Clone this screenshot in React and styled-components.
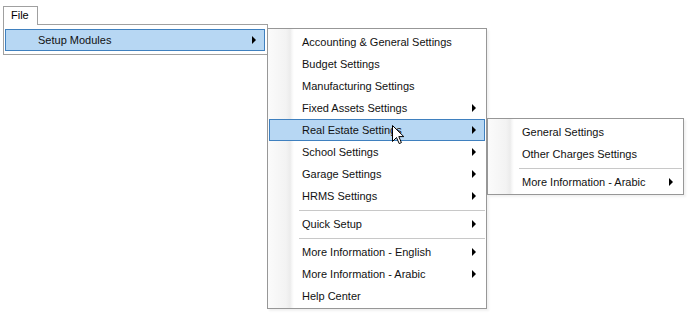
import React from "react";
import styled, { createGlobalStyle } from "styled-components";

const GlobalStyle = createGlobalStyle`
  body {
    margin: 0;
    background: #fff;
    font-family: "Liberation Sans", Arial, sans-serif;
    font-size: 11px;
    color: #000;
  }
`;

const Page = styled.div`
  position: relative;
  width: 698px;
  height: 322px;
  padding: 6px 0 0 3px;
  box-sizing: border-box;
`;

const MenuRoot = styled.div`
  position: relative;
  width: 35px;
`;

const FileTab = styled.div`
  position: relative;
  z-index: 2;
  box-sizing: border-box;
  width: 35px;
  height: 19px;
  border: 1px solid #a0a0a0;
  border-bottom: none;
  background: #fff;
  padding-left: 7px;
  line-height: 17px;
`;

const Dropdown = styled.div`
  position: absolute;
  z-index: 1;
  top: 18px;
  left: 0;
  width: 265px;
  box-sizing: border-box;
  border: 1px solid #a0a0a0;
  background: #fff;
  padding: 4px 2px 3px 1px;
`;

const Popup = styled.div`
  position: absolute;
  z-index: 3;
  left: ${(p) => p.$left}px;
  top: ${(p) => p.$top}px;
  width: ${(p) => p.$width}px;
  box-sizing: border-box;
  border: 1px solid #979797;
  padding: 2px 1px 1px 1px;
  background: linear-gradient(
    90deg,
    #fbfbfb 0px,
    #f3f3f3 18px,
    #ececec 22px,
    #f7f7f7 24px,
    #fff 26px,
    #fff 100%
  );
  box-shadow: 2px 2px 2px rgba(0, 0, 0, 0.06);
`;

const Item = styled.div`
  position: relative;
  display: flex;
  align-items: center;
  height: 22px;
  box-sizing: border-box;
  border: 1px solid ${(p) => (p.$active ? "#3f80bf" : "transparent")};
  background: ${(p) => (p.$active ? "#b7d7f3" : "transparent")};
  padding: 0 8px 0 32px;
  white-space: nowrap;
`;

const Label = styled.span`
  flex: 1;
  color: #111;
`;

const Arrow = styled.span`
  width: 0;
  height: 0;
  border-left: 4px solid #000;
  border-top: 4px solid transparent;
  border-bottom: 4px solid transparent;
`;

const Separator = styled.div`
  height: 6px;
  display: flex;
  align-items: center;
  padding-left: 30px;
  &::after {
    content: "";
    flex: 1;
    height: 1px;
    background: #c8c8c8;
  }
`;

const Cursor = styled.svg`
  position: absolute;
  z-index: 5;
  left: 122px;
  top: 5px;
`;

const MenuItem = ({ label, sub, active, children }) => (
  <Item $active={active}>
    <Label>{label}</Label>
    {sub && <Arrow />}
    {children}
  </Item>
);

export default function App() {
  return (
    <>
      <GlobalStyle />
      <Page>
        <MenuRoot>
          <FileTab>File</FileTab>
          <Dropdown>
            <MenuItem label="Setup Modules" sub active>
              <Popup $left={261} $top={-2} $width={220}>
                <MenuItem label="Accounting & General Settings" />
                <MenuItem label="Budget Settings" />
                <MenuItem label="Manufacturing Settings" />
                <MenuItem label="Fixed Assets Settings" sub />
                <MenuItem label="Real Estate Settings" sub active>
                  <Popup $left={217} $top={-2} $width={197}>
                    <MenuItem label="General Settings" />
                    <MenuItem label="Other Charges Settings" />
                    <Separator />
                    <MenuItem label="More Information - Arabic" sub />
                  </Popup>
                  <Cursor width="13" height="20" viewBox="0 0 13 20">
                    <path
                      d="M0.5 0.5 L0.5 16.5 L4.5 12.5 L7.2 18.6 L9.4 17.6 L6.8 11.6 L11.8 11.6 Z"
                      fill="#fff"
                      stroke="#000"
                      strokeWidth="1"
                      strokeLinejoin="miter"
                    />
                  </Cursor>
                </MenuItem>
                <MenuItem label="School Settings" sub />
                <MenuItem label="Garage Settings" sub />
                <MenuItem label="HRMS Settings" sub />
                <Separator />
                <MenuItem label="Quick Setup" sub />
                <Separator />
                <MenuItem label="More Information - English" sub />
                <MenuItem label="More Information - Arabic" sub />
                <MenuItem label="Help Center" />
              </Popup>
            </MenuItem>
          </Dropdown>
        </MenuRoot>
      </Page>
    </>
  );
}
